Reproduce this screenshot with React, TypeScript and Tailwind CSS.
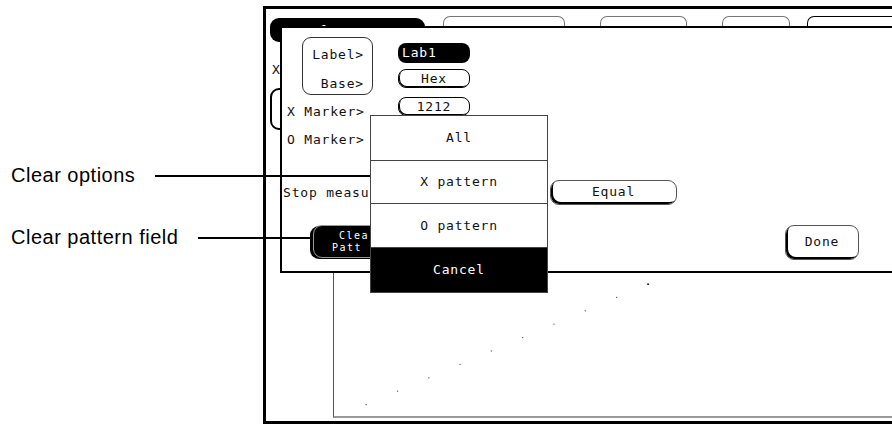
const mono = "font-['DejaVu_Sans_Mono',monospace] text-[13px] tracking-[0.8px] text-[#111]";

function Tab({ className }: { className: string }) {
  return <div className={`shrink-0 h-[12px] border border-b-0 rounded-t-[7px] ${className}`} />;
}

function Screen() {
  return (
    <div className="relative mt-[6px] w-[700px] h-[418px] shrink-0 border-[3px] border-black">
      {/* tab row behind the dialog */}
      <div className="flex items-start pt-[7px]">
        <div className={`shrink-0 ml-[4px] mt-[2px] w-[155px] h-[24px] rounded-[9px] bg-black pl-[14px] pt-[3px] ${mono} text-white`}>
          Waveform 1
        </div>
        <Tab className="ml-[18px] w-[122px] border-[#777]" />
        <Tab className="ml-[35px] w-[87px] border-[#777]" />
        <Tab className="ml-[35px] w-[68px] border-[#777]" />
        <Tab className="ml-[17px] w-[200px] border-black" />
      </div>

      {/* fragments of the screen under the dialog */}
      <div className={`absolute left-[6px] top-[51px] ${mono}`}>X</div>
      <div className="absolute left-[4px] top-[79px] w-[30px] h-[42px] border-2 border-black rounded-l-[9px]" />

      {/* waveform area */}
      <div className="absolute left-[67px] top-[200px] w-[700px] h-[209px] border-l border-[#555] border-b-2 border-b-[#999]" />
      <svg className="absolute left-[67px] top-[264px]" width="600" height="144">
        {Array.from({ length: 10 }).map((_, k) => (
          <rect
            key={k}
            x={32.6 + 31.3 * k}
            y={131 - 13.4 * k}
            width={k === 9 ? 1.6 : 1.2}
            height={k === 9 ? 1.6 : 1.2}
            fill={k === 9 ? "#111" : "#666"}
          />
        ))}
      </svg>

      <Dialog />
    </div>
  );
}

function Dialog() {
  return (
    <div className="absolute left-[14px] top-[17px] w-[700px] h-[247px] bg-white border-l-2 border-t-2 border-b-2 border-black z-10">
      <div className="flex">
        <div className="w-[91px]">
          <div className="ml-[20px] mt-[9px] w-[71px] h-[58px] rounded-[9px] border border-[#333] flex flex-col items-end pr-[8px]">
            <div className={`mt-[7px] h-[20px] leading-[20px] ${mono}`}>Label&gt;</div>
            <div className={`mt-[9px] h-[20px] leading-[20px] ${mono}`}>Base&gt;</div>
          </div>
          <div className={`mt-[7px] pl-[5px] h-[20px] leading-[20px] whitespace-nowrap ${mono}`}>X Marker&gt;</div>
          <div className={`mt-[8px] pl-[5px] h-[20px] leading-[20px] whitespace-nowrap ${mono}`}>O Marker&gt;</div>
        </div>
        <div className="ml-[25px] w-[72px] flex flex-col">
          <div className={`mt-[15px] h-[20px] rounded-[8px] bg-black pl-[4px] leading-[20px] ${mono} text-white`}>Lab1</div>
          <div className={`mt-[6px] h-[19px] rounded-[8px] border border-black shadow-[inset_1px_-1px_0_#000] text-center leading-[17px] ${mono}`}>Hex</div>
          <div className={`mt-[9px] h-[19px] rounded-[8px] border border-black shadow-[inset_1px_-1px_0_#000] text-center leading-[17px] ${mono}`}>1212</div>
        </div>
      </div>

      <div className="mt-[30px] flex items-center h-[25px]">
        {/* the rest of this line sits under the popup menu */}
        <div className={`pl-[1px] w-[87px] overflow-hidden whitespace-nowrap ${mono}`}>Stop measu</div>
        <div className={`ml-[181px] w-[127px] h-[25px] rounded-[9px] border border-[#555] shadow-[inset_2px_-2px_0_#000] text-center leading-[22px] ${mono}`}>
          Equal
        </div>
      </div>

      <div className="mt-[20px] flex items-start">
        {/* Clear Pattern button, its right half hidden by the popup */}
        <div className="ml-[28px] pl-[3px] pb-[2px] w-[60px] overflow-hidden shrink-0">
          <div className="w-[98px] h-[33px] rounded-[9px] bg-black border border-[#999] shadow-[-3px_1px_0_#000] flex flex-col justify-center">
            <div className="font-['DejaVu_Sans_Mono',monospace] text-[10px] leading-[12px] tracking-[1.5px] text-white pl-[25px]">Clea</div>
            <div className="font-['DejaVu_Sans_Mono',monospace] text-[10px] leading-[12px] tracking-[1.5px] text-white pl-[18px]">Patt</div>
          </div>
        </div>
        <div className={`ml-[415px] w-[74px] h-[35px] rounded-[9px] border border-[#555] shadow-[inset_2px_-2px_0_#000] text-center leading-[32px] ${mono}`}>
          Done
        </div>
      </div>
    </div>
  );
}

function Popup() {
  return (
    <div className="absolute left-[370px] top-[115px] w-[178px] h-[178px] bg-white border border-[#444] flex flex-col z-20">
      <div className={`h-[44px] flex items-center justify-center ${mono}`}>All</div>
      <div className="h-px bg-[#444]" />
      <div className={`h-[42px] flex items-center justify-center ${mono}`}>X pattern</div>
      <div className="h-px bg-[#444]" />
      <div className={`h-[43px] flex items-center justify-center ${mono}`}>O pattern</div>
      <div className="h-px bg-[#444]" />
      <div className={`flex-1 bg-black flex items-center justify-center ${mono} text-white`}>Cancel</div>
    </div>
  );
}

export default function App() {
  return (
    <div className="relative w-[892px] h-[424px] bg-white overflow-hidden flex font-['Liberation_Sans',Arial,sans-serif]">
      <div className="w-[263px] shrink-0 pl-[11px] pt-[164px] text-[20px] leading-[22px] tracking-[0.5px] text-black">
        <div>Clear options</div>
        <div className="mt-[40px] whitespace-nowrap">Clear pattern field</div>
      </div>
      <Screen />
      <Popup />
      <div className="absolute left-[155px] top-[175px] w-[215px] h-[2px] bg-black z-30" />
      <div className="absolute left-[198px] top-[237px] w-[115px] h-[2px] bg-black z-30" />
    </div>
  );
}
